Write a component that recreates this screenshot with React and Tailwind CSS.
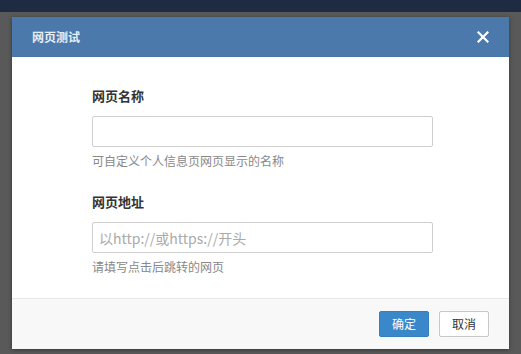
import React from "react";

const font = { fontFamily: '"Noto Sans CJK SC", "Noto Sans", sans-serif' };

function Field({ label, placeholder, help, first }) {
  return (
    <div className={first ? "" : "mt-[22px]"}>
      <div className="text-[13px] leading-[20px] font-bold text-[#333]">{label}</div>
      <input
        type="text"
        placeholder={placeholder}
        className="mt-[10px] block w-[341px] h-[31px] rounded-[2px] border border-[#cfcfcf] bg-white px-[6px] text-[14px] text-[#333] outline-none placeholder:text-[#aaa]"
      />
      <div className="mt-[5px] text-[12px] leading-[18px] text-[#888]">{help}</div>
    </div>
  );
}

export default function App() {
  return (
    <div className="min-h-[354px] bg-[#595959] flex flex-col" style={font}>
      <div className="h-[12px] bg-[#1f2b41]" />
      <div className="mx-[12px] mt-[5px] bg-white shadow-[0_1px_4px_rgba(0,0,0,0.4)]">
        {/* header */}
        <div className="h-[40px] bg-[#4c79ab] border-b border-[#4775a8] flex items-center justify-between pl-[20px] pr-[20px]">
          <span className="text-[12px] font-bold text-[#e6edf5]">网页测试</span>
          <svg width="12" height="12" viewBox="0 0 12 12" className="text-white">
            <path d="M1.5 1.5 L10.5 10.5 M10.5 1.5 L1.5 10.5" stroke="currentColor" strokeWidth="2.2" strokeLinecap="square" />
          </svg>
        </div>

        {/* body */}
        <div className="pl-[80px] pt-[29px] pb-[22px]">
          <Field first label="网页名称" placeholder="" help="可自定义个人信息页网页显示的名称" />
          <Field label="网页地址" placeholder="以http://或https://开头" help="请填写点击后跳转的网页" />
        </div>

        {/* footer */}
        <div className="h-[51px] border-t border-[#e8e8e8] bg-[#f8f8f8] flex items-start justify-end gap-[10px] pt-[12px] pr-[20px]">
          <button className="w-[50px] h-[26px] rounded-[2px] bg-[#3a88c9] border border-[#3480c0] text-[12px] text-white">确定</button>
          <button className="w-[50px] h-[26px] rounded-[2px] bg-white border border-[#c8c8c8] text-[12px] text-[#333]">取消</button>
        </div>
      </div>
    </div>
  );
}
